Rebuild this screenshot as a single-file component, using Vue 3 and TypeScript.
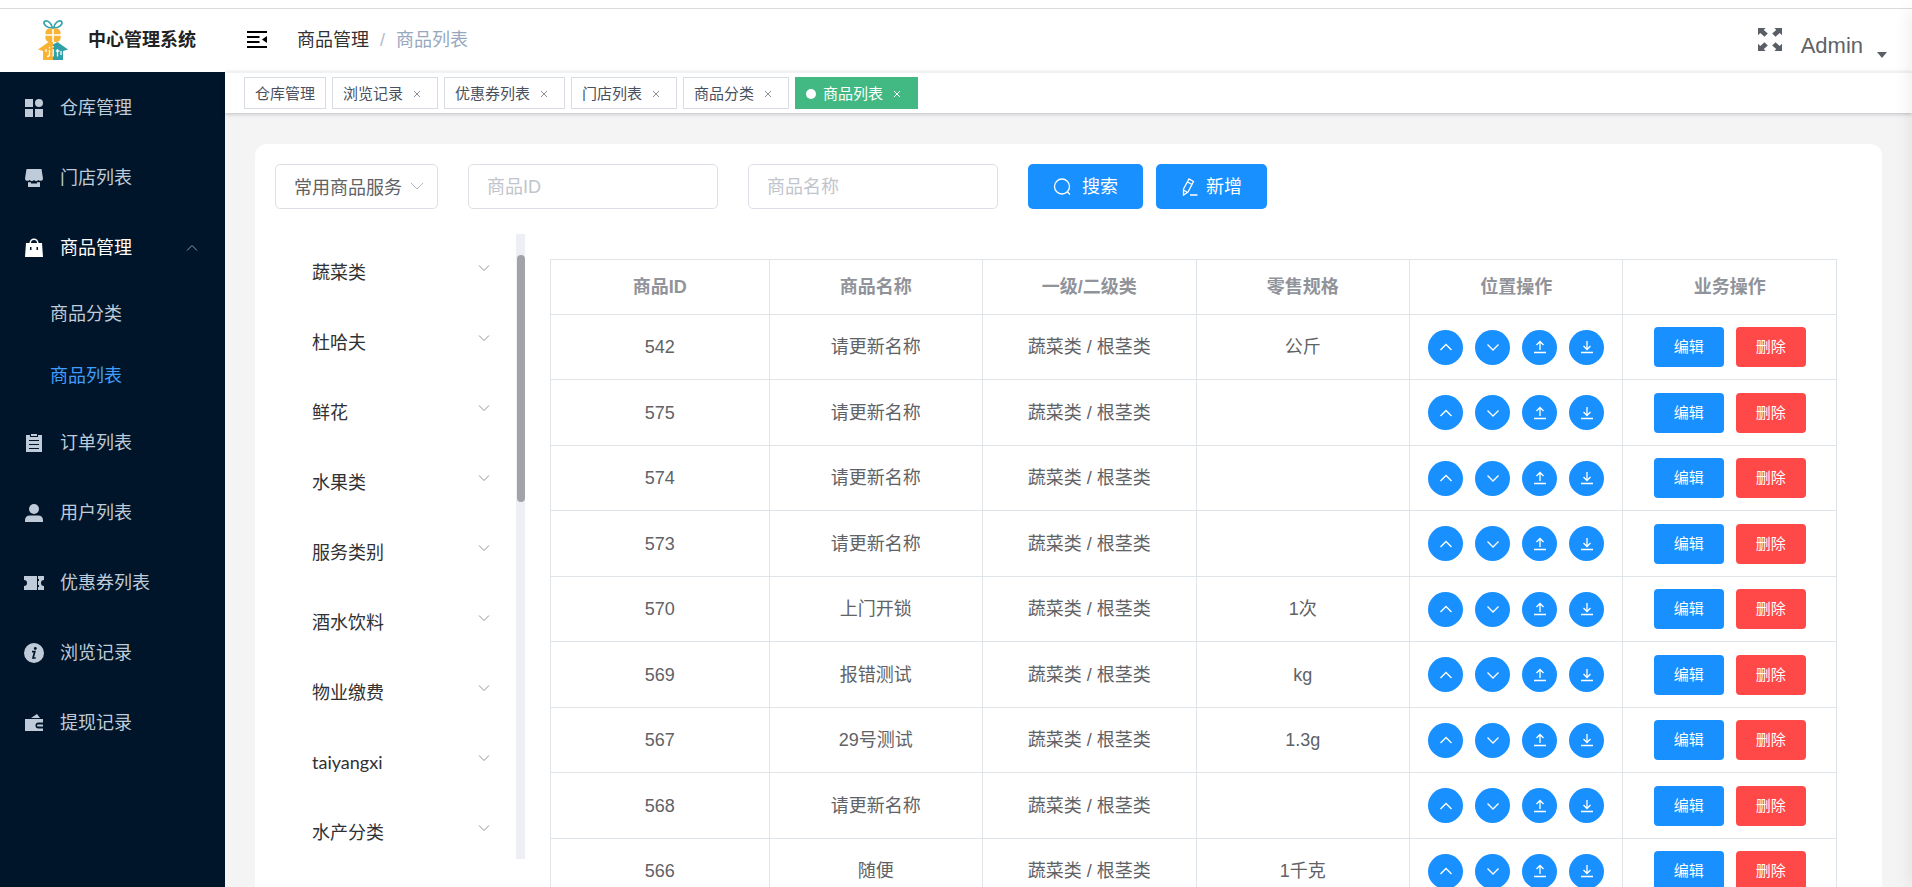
<script setup lang="ts">
import { ref } from 'vue'

interface MenuItem {
  label: string
  icon: string
  children?: string[]
}

interface Tag {
  label: string
  closable: boolean
}

interface Product {
  id: number
  name: string
  spec: string
}

const menu: MenuItem[] = [
  { label: '仓库管理', icon: 'grid' },
  { label: '门店列表', icon: 'shop' },
  { label: '商品管理', icon: 'bag', children: ['商品分类', '商品列表'] },
  { label: '订单列表', icon: 'order' },
  { label: '用户列表', icon: 'user' },
  { label: '优惠券列表', icon: 'ticket' },
  { label: '浏览记录', icon: 'info' },
  { label: '提现记录', icon: 'wallet' },
]

const tags: Tag[] = [
  { label: '仓库管理', closable: false },
  { label: '浏览记录', closable: true },
  { label: '优惠券列表', closable: true },
  { label: '门店列表', closable: true },
  { label: '商品分类', closable: true },
  { label: '商品列表', closable: true },
]

const current = '商品列表'

const categories: string[] = [
  '蔬菜类', '杜哈夫', '鲜花', '水果类', '服务类别', '酒水饮料', '物业缴费', 'taiyangxi', '水产分类',
]

const columns: string[] = ['商品ID', '商品名称', '一级/二级类', '零售规格', '位置操作', '业务操作']

const products: Product[] = [
  { id: 542, name: '请更新名称', spec: '公斤' },
  { id: 575, name: '请更新名称', spec: '' },
  { id: 574, name: '请更新名称', spec: '' },
  { id: 573, name: '请更新名称', spec: '' },
  { id: 570, name: '上门开锁', spec: '1次' },
  { id: 569, name: '报错测试', spec: 'kg' },
  { id: 567, name: '29号测试', spec: '1.3g' },
  { id: 568, name: '请更新名称', spec: '' },
  { id: 566, name: '随便', spec: '1千克' },
]

const moves = [
  { label: '上移', path: 'M2.5 11 8 5.5l5.500 5.500' },
  { label: '下移', path: 'M2.5 5.5 8 11l5.5-5.5' },
  { label: '置顶', path: 'M2 13.500h12M8 11V3M4.5 6 8 2.5 11.5 6' },
  { label: '置底', path: 'M2 13.500h12M8 2v8.500M4.5 7 8 10.500 11.500 7' },
]

const productId = ref('')
const productName = ref('')
const service = ref('常用商品服务')
</script>

<template>
  <div class="shell">
    <header class="topbar">
      <div class="brand">
        <svg class="logo" viewBox="0 0 30 40" aria-hidden="true">
          <g fill="none" stroke="#35a3ad" stroke-width="1.6">
            <path d="M14.500 8C9 8 4.500 4.500 6.500 1.200 10 0 13.500 3 14.500 8z" />
            <path d="M15.500 8c5.500 0 10-3.500 8-6.800C20 0 16.500 3 15.500 8z" />
          </g>
          <path fill="#f9b233" d="M14.200 8.500v5.700H7.500c-.5-3 1.500-5.700 4-5.700zM15.800 8.500v5.700h6.700c.5-3-1.500-5.700-4-5.700zM14.200 15.700v6.300h-2.500c-3 0-5-3-4.200-6.300zM15.800 15.700v6.300h2.500c3 0 5-3 4.200-6.300z" />
          <path fill="#f9b233" d="M15 22h-4.500L0 29.500l5 1.500v9h10z" />
          <path fill="#2f9fa8" d="M15 24.500 19.500 22 30 29.500 25 31v9H15z" />
          <path fill="none" stroke="#fff" stroke-width="1.300" d="M11.500 30v4.500q0 2-2.500 2M15.200 29v7.500M19.500 29v7.500M17.800 31h3.700M11.500 27v1.500M15.200 26v1.500M8 29v3M23 31v4" />
        </svg>
        <strong class="brand-name">中心管理系统</strong>
      </div>
      <button class="plain" type="button" aria-label="折叠菜单">
        <svg width="20" height="18" viewBox="0 0 20 18" aria-hidden="true">
          <path stroke="#000" stroke-width="2" d="M0 1h20M0 6h12.500M0 11h12.500M0 16h20" />
          <path d="M20 5v7l-5-3.500z" />
        </svg>
      </button>
      <nav class="crumbs" aria-label="面包屑">
        <span>商品管理</span>
        <span class="slash">/</span>
        <span class="crumb-last">商品列表</span>
      </nav>
      <button class="plain full" type="button" aria-label="全屏">
        <svg width="24" height="23" viewBox="0 0 24 23" fill="#5a5e66" aria-hidden="true">
          <path d="M0 0h7.500L5.800 1.900 9.800 5.500 6.500 8.700 2.300 5 0 7.300z" />
          <path d="M24 0h-7.500l1.700 1.900-4 3.600 3.300 3.200L21.700 5 24 7.300z" />
          <path d="M0 23h7.500l-1.700-1.900 4-3.600-3.300-3.200L2.300 18 0 15.700z" />
          <path d="M24 23h-7.500l1.700-1.900-4-3.600 3.300-3.200 4.200 3.700 2.300-2.300z" />
        </svg>
      </button>
      <button class="plain account" type="button">
        <span>Admin</span>
        <svg class="caret" width="10" height="6" viewBox="0 0 10 6" aria-hidden="true"><path fill="#5a5e66" d="M0 0h10L5 6z" /></svg>
      </button>
    </header>

    <div class="body">
      <aside class="sidebar">
        <ul class="menu">
          <li v-for="item in menu" :key="item.label">
            <a href="#" class="menu-item" :class="{ open: item.children }">
              <svg class="menu-icon" viewBox="0 0 18 18" aria-hidden="true">
                <g v-if="item.icon === 'grid'"><path d="M0 0h8v8H0zM0 10h8v8H0zM10 10h8v8h-8z" /><circle cx="14" cy="4" r="4" /></g>
                <g v-else-if="item.icon === 'shop'"><path d="M1.500 0h15L18 9.500c0 2.500-3 3-4.500 1.500-1.500 1.500-3.500 1.500-4.500 0-1 1.500-3 1.500-4.500 0C3 12.500 0 12 0 9.500z" /><path d="M3 13.200h3v1.300h6v-1.300h3V18H3z" /></g>
                <path v-else-if="item.icon === 'bag'" fill-rule="evenodd" d="M4.500 4a4.500 4.500 0 0 1 9 0H17l1 14H0L1 4zM6 4h6a3 3 0 0 0-6 0zM5 8v3h1.500V8zM11.500 8v3H13V8z" />
                <path v-else-if="item.icon === 'order'" fill-rule="evenodd" d="M1 1h4v2h8V1h4v17H1zM6 0h6v2H6zM4 7h10V6H4zM4 11h10v-1H4zM4 15h10v-1H4z" />
                <g v-else-if="item.icon === 'user'"><circle cx="9" cy="5" r="5" /><path d="M5 11.500h8q5 0 5 5V18H0v-1.500q0-5 5-5z" /></g>
                <g v-else-if="item.icon === 'ticket'"><path d="M-1 2h13v14H-1v-4a3 3 0 0 0 0-6zM13 2h6v4a3 3 0 0 0 0 6v4h-6v-3h1v-2h-1V7h1V5h-1z" /></g>
                <g v-else-if="item.icon === 'info'"><circle cx="9" cy="9" r="10" /><circle cx="10.300" cy="4.500" r="1.400" fill="#001529" /><path fill="none" stroke="#001529" stroke-width="1.700" d="M7 7.700h2.800L8 14h2.700" /></g>
                <path v-else fill-rule="evenodd" d="M0 5h18v3.500h-4.500a3 3 0 0 0 0 6H18V17H0zM6 4l6-4 3 4zM12.500 10.500h5.500v2h-5.500q-1-1 0-2z" />
              </svg>
              <span>{{ item.label }}</span>
              <svg v-if="item.children" class="menu-arrow" width="12" height="8" viewBox="0 0 12 8" aria-hidden="true"><path d="M1 6.500 6 1.500l5 5" /></svg>
            </a>
            <ul v-if="item.children" class="submenu">
              <li v-for="child in item.children" :key="child">
                <a href="#" class="submenu-item" :class="{ active: child === current }">{{ child }}</a>
              </li>
            </ul>
          </li>
        </ul>
      </aside>

      <div class="main">
        <nav class="tags" aria-label="标签页">
          <span v-for="tag in tags" :key="tag.label" class="tag" :class="{ active: tag.label === current }">
            <a href="#">{{ tag.label }}</a>
            <button v-if="tag.closable" class="tag-close" type="button" :aria-label="'关闭' + tag.label">
              <svg width="6" height="6" viewBox="0 0 6 6" aria-hidden="true"><path d="m0 0 6 6M6 0 0 6" /></svg>
            </button>
          </span>
        </nav>

        <main class="content">
          <section class="card">
            <form class="filters" @submit.prevent>
              <div class="select-wrap">
                <select v-model="service" class="field" aria-label="服务类型">
                  <option>常用商品服务</option>
                </select>
                <svg class="select-arrow" width="14" height="8" viewBox="0 0 14 8" aria-hidden="true"><path d="m1 1 6 6 6-6" /></svg>
              </div>
              <input v-model="productId" class="field text" type="text" placeholder="商品ID" aria-label="商品ID" />
              <input v-model="productName" class="field text" type="text" placeholder="商品名称" aria-label="商品名称" />
              <div class="buttons">
                <button class="primary search" type="submit">
                  <svg width="18" height="18" viewBox="0 0 18 18" aria-hidden="true"><circle cx="9" cy="8.500" r="7.500" /><path d="m14 13.500 3 3" /></svg>
                  搜索
                </button>
                <button class="primary add" type="button">
                  <svg width="17" height="18" viewBox="0 0 17 18" aria-hidden="true"><path d="m2.500 11 5.500-10 4.500 2.500L7 14l-4.500 3zM6.500 4l4.500 2.500M2.500 12l4 2.500M9 17h7.500" /></svg>
                  新增
                </button>
              </div>
            </form>

            <div class="columns">
              <div class="tree">
                <ul class="tree-list">
                  <li v-for="category in categories" :key="category">
                    <button class="tree-item" type="button">
                      <span>{{ category }}</span>
                      <svg width="12" height="8" viewBox="0 0 12 8" aria-hidden="true"><path d="m1 1.500 5 5 5-5" /></svg>
                    </button>
                  </li>
                </ul>
                <div class="track"><div class="thumb"></div></div>
              </div>

              <table class="table">
                <thead>
                  <tr>
                    <th v-for="column in columns" :key="column" scope="col">{{ column }}</th>
                  </tr>
                </thead>
                <tbody>
                  <tr v-for="product in products" :key="product.id">
                    <td>{{ product.id }}</td>
                    <td>{{ product.name }}</td>
                    <td>蔬菜类 / 根茎类</td>
                    <td>{{ product.spec }}</td>
                    <td>
                      <div class="actions">
                        <button v-for="move in moves" :key="move.label" class="round" type="button" :aria-label="move.label">
                          <svg width="16" height="16" viewBox="0 0 16 16" aria-hidden="true"><path :d="move.path" /></svg>
                        </button>
                      </div>
                    </td>
                    <td>
                      <div class="actions">
                        <button class="small" type="button">编辑</button>
                        <button class="small danger" type="button">删除</button>
                      </div>
                    </td>
                  </tr>
                </tbody>
              </table>
            </div>
          </section>
        </main>
      </div>
    </div>
    <div class="drawer" aria-hidden="true"></div>
  </div>
</template>

<style>
body {
  margin: 0;
  overflow: hidden;
}
</style>

<style scoped>
.shell,
.shell * {
  box-sizing: border-box;
}

.shell {
  display: flex;
  flex-direction: column;
  height: 100vh;
  overflow: hidden;
  padding-top: 8px;
  background: #fff;
  color: #606266;
  font-family: "Liberation Sans", "Noto Sans CJK SC", sans-serif;
  font-size: 18px;
  line-height: 24px;
}

a {
  color: inherit;
  text-decoration: none;
}

ul {
  margin: 0;
  padding: 0;
  list-style: none;
}

button,
input,
select {
  font: inherit;
}

svg {
  display: block;
  flex: none;
  overflow: visible;
}

.plain {
  padding: 0;
  border: 0;
  background: none;
  color: inherit;
}

.topbar {
  display: flex;
  flex: none;
  align-items: center;
  height: 64px;
  padding: 0 25px 2px 0;
  border-top: 1px solid #d9dadd;
}

.brand {
  display: flex;
  align-items: center;
  gap: 20px;
  width: 247px;
  padding-left: 38px;
}

.logo {
  width: 30px;
  height: 40px;
}

.brand-name {
  color: #222;
}

.crumbs {
  display: flex;
  gap: 11px;
  margin-left: 30px;
  color: #303133;
}

.slash {
  color: #b4bac6;
}

.crumb-last {
  color: #97a8be;
}

.full {
  margin-left: auto;
}

.account {
  display: flex;
  align-items: flex-end;
  gap: 14px;
  margin: 12px 0 0 19px;
  font-size: 22px;
}

.body {
  display: flex;
  flex: 1;
  min-height: 0;
}

.sidebar {
  flex: none;
  width: 225px;
  padding-top: 1px;
  background: #001529;
  color: #bfcbd9;
}

.menu-item {
  display: flex;
  align-items: center;
  gap: 17px;
  height: 70px;
  padding: 0 27px 0 25px;
}

.menu-icon {
  width: 18px;
  height: 18px;
  fill: currentColor;
}

.open {
  color: #fff;
}

.menu-arrow {
  margin-left: auto;
  fill: none;
  stroke: #8f9aa6;
}

.submenu {
  padding-bottom: 1px;
}

.submenu-item {
  display: flex;
  align-items: center;
  height: 62px;
  padding-left: 50px;
}

.submenu-item.active {
  color: #409eff;
}

.main {
  display: flex;
  flex: 1;
  flex-direction: column;
  min-width: 0;
  background: #f4f4f4;
}

.tags {
  display: flex;
  flex: none;
  align-items: center;
  gap: 6px;
  height: 41px;
  padding-left: 19px;
  border-top: 1px solid #f1f2f3;
  background: #fff;
  box-shadow: 0 1px 4px rgba(0, 21, 41, 0.25);
  color: #495060;
  font-size: 15px;
}

.tag {
  display: flex;
  align-items: center;
  height: 32px;
  padding: 1px 10px 0;
  border: 1px solid #d8dce5;
}

.tag.active {
  border-color: #42b983;
  background: #42b983;
  color: #fff;
}

.tag.active::before {
  width: 10px;
  height: 10px;
  margin-right: 7px;
  border-radius: 50%;
  background: #fff;
  content: "";
}

.tag-close {
  width: 24px;
  padding: 1px 0 0 11px;
  border: 0;
  background: none;
  color: #8a8f99;
}

.active .tag-close {
  color: #fff;
}

.tag-close path {
  stroke: currentColor;
}

.content {
  flex: 1;
  min-height: 0;
  padding: 31px 30px 0;
}

.card {
  padding: 20px 45px 20px 20px;
  border-radius: 12px;
  background: #fff;
}

.filters {
  display: flex;
  gap: 30px;
}

.field {
  height: 45px;
  padding: 2px 18px 0;
  border: 1px solid #dcdfe6;
  border-radius: 5px;
  outline: 0;
  background: #fff;
  color: #606266;
}

.field::placeholder {
  color: #c0c4cc;
}

.text {
  width: 250px;
}

.select-wrap {
  position: relative;
  width: 163px;
}

.select-wrap .field {
  width: 100%;
  appearance: none;
  padding-right: 30px;
}

.select-arrow {
  position: absolute;
  top: 18px;
  right: 14px;
  fill: none;
  stroke: #b4b8c0;
  pointer-events: none;
}

.buttons {
  display: flex;
  gap: 13px;
}

.primary {
  display: flex;
  align-items: center;
  height: 45px;
  padding: 0 25px;
  border: 0;
  border-radius: 5px;
  background: #1890ff;
  color: #fff;
}

.primary svg {
  fill: none;
  stroke: #fff;
  stroke-width: 1.3;
}

.search {
  gap: 11px;
}

.add {
  gap: 8px;
}

.columns {
  display: flex;
  align-items: flex-start;
  margin-top: 25px;
}

.tree {
  display: flex;
  flex: none;
  width: 250px;
  height: 625px;
  margin-right: 25px;
  overflow: hidden;
}

.tree-list {
  flex: 1;
}

.tree-item {
  display: flex;
  align-items: center;
  justify-content: space-between;
  width: 100%;
  height: 70px;
  padding: 0 26px 0 37px;
  border: 0;
  background: none;
  color: #303133;
  font-family: Lato, "Noto Sans CJK SC", sans-serif;
}

.tree-item span {
  padding-top: 6px;
}

.tree-item svg {
  margin-bottom: 3px;
  fill: none;
  stroke: #8f9299;
}

.track {
  width: 9px;
  padding: 21px 0 0 1px;
  background: #edeff5;
}

.thumb {
  height: 247px;
  border-radius: 4px;
  background: #a1a3a9;
}

.table {
  flex: 1 1 0;
  width: 100%;
  min-width: 0;
  margin-top: 25px;
  border-collapse: collapse;
  table-layout: fixed;
  text-align: center;
}

.table th,
.table td {
  padding: 0;
  border: 1px solid #dfe4e8;
}

.table th {
  height: 55px;
  color: #909399;
}

.table th:first-child {
  width: 17%;
}

.table td {
  height: 65px;
}

.table tr:nth-child(even) td {
  height: 66px;
}

.actions {
  display: flex;
  justify-content: center;
  gap: 12px;
}

.round {
  display: grid;
  place-items: center;
  width: 35px;
  height: 35px;
  padding: 0;
  border: 0;
  border-radius: 50%;
  background: #1890ff;
}

.round svg {
  fill: none;
  stroke: #fff;
  stroke-width: 1.3;
}

.small {
  width: 70px;
  height: 40px;
  padding: 0;
  border: 0;
  border-radius: 4px;
  background: #1890ff;
  color: #fff;
  font-size: 15px;
}

.danger {
  background: #ff4949;
}

.drawer {
  position: fixed;
  top: 9px;
  right: -10px;
  bottom: 0;
  width: 10px;
  box-shadow: 0 0 18px rgba(0, 0, 0, 0.12);
}
</style>
